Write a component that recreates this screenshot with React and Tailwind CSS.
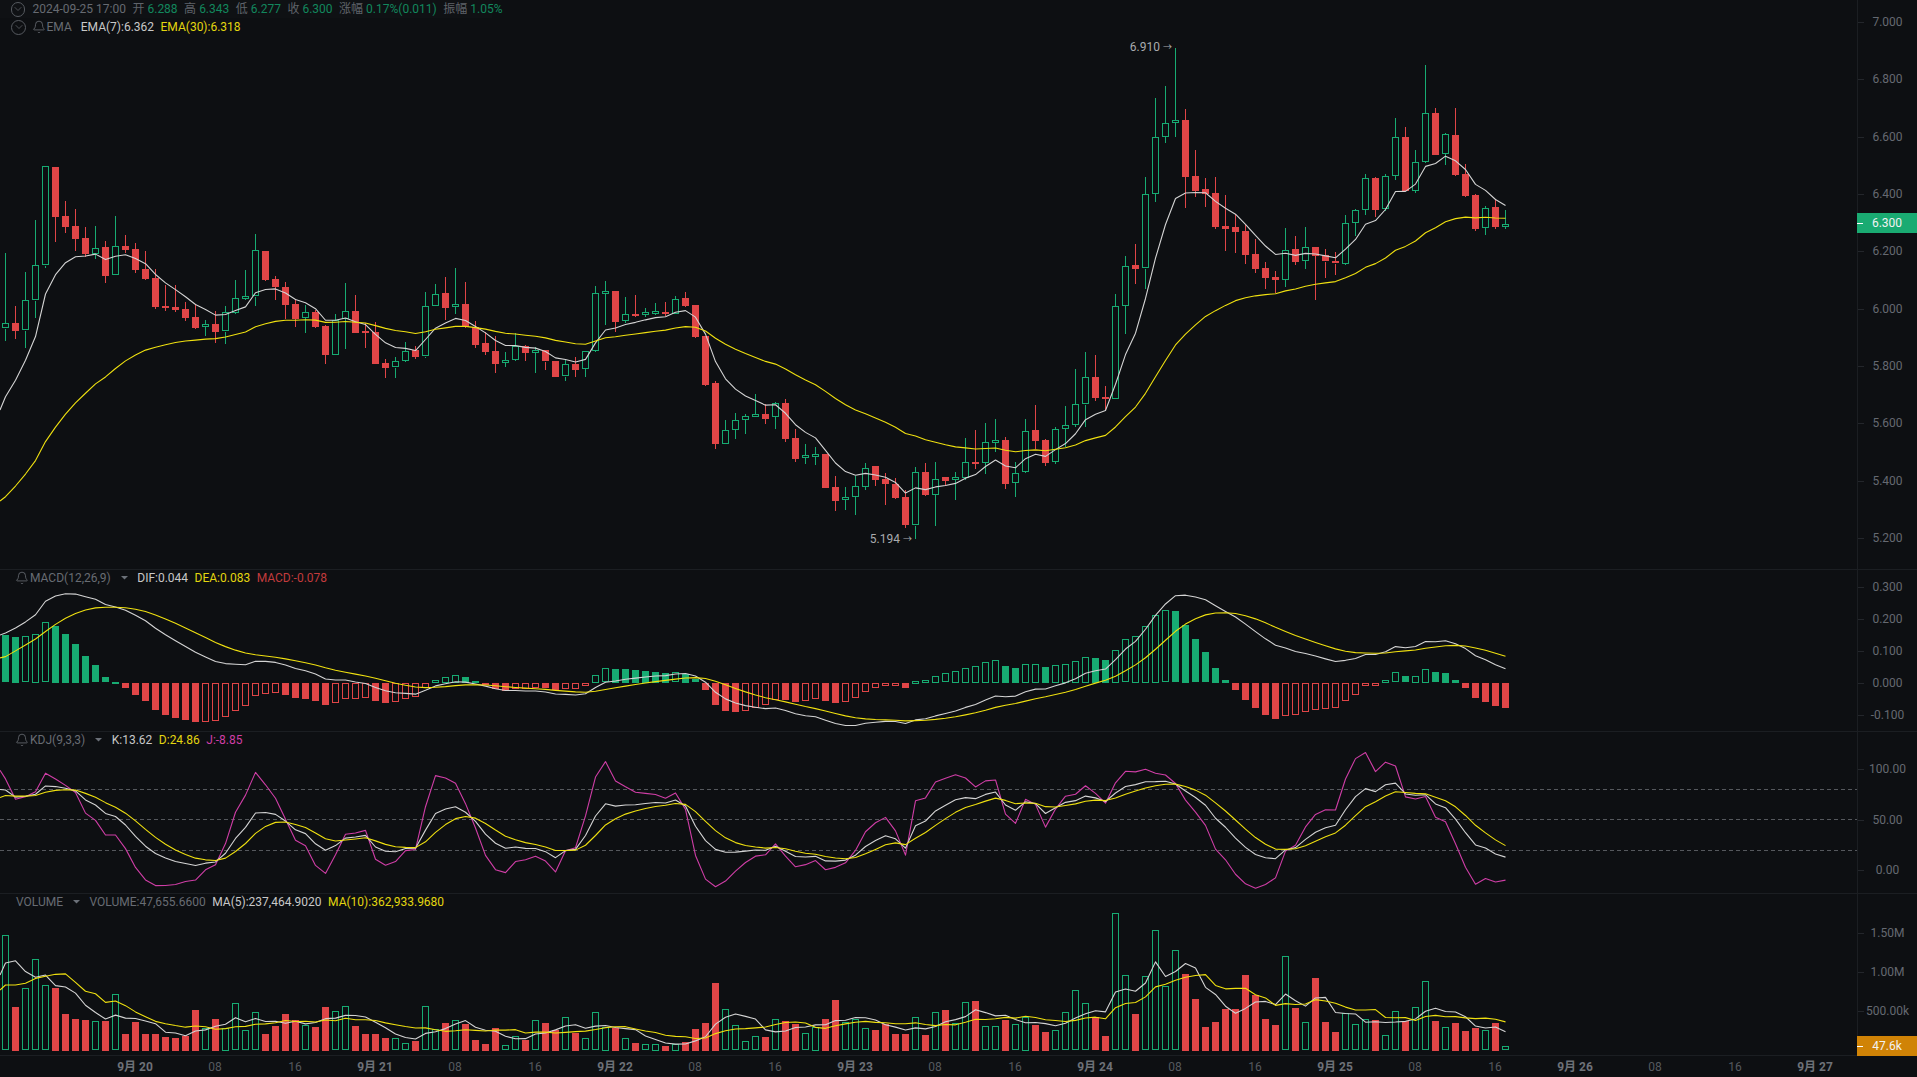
import React from "react";
import { Bell, ChevronDown } from "lucide-react";

const GREEN = "#17ab72";
const RED = "#e04547";
const YEL = "#efe010";
const WHT = "#d4d4d4";
const MAG = "#cf3ea6";

// [wickTop, bodyTop, bodyBottom, wickBottom, green]
const seg9 = [[280,490,506,543,1],[438,489,513,538,0],[335,421,512,563,1],[180,316,422,473,1],[19,19,317,325,1],[21,21,170,245,0],[122,168,200,220,0],[146,198,237,272,0],[202,234,282,290,0],[198,265,282,297,1],[244,261,348,368,0],[168,259,347,347,1],[226,258,270,280,0],[250,267,330,340,0],[273,327,357,360,0],[327,354,441,448,0],[376,438,444,453,0],[376,441,450,455,0],[427,447,474,483,0],[432,471,504,507,0],[480,493,502,528,1],[452,492,516,548,0],[438,457,515,552,1],[360,415,460,462,1],[330,409,416,420,1],[222,271,410,437,1],[273,273,360,363,0],[347,357,381,421,0],[367,381,435,477,0],[417,432,477,500,0],[435,457,475,518,1],[450,456,500,505,0],[495,498,585,612,0],[463,480,584,584,1],[370,454,478,567,1],[405,453,519,520,0],[490,513,519,563,0],[486,516,612,612,0],[597,609,624,653,0],[592,604,623,654,1],[545,574,604,605,1],[558,571,591,597,0],[396,439,590,593,1],[373,403,440,440,1],[350,399,443,480,0],[325,433,442,462,1],[366,432,500,505,0],[484,500,555,565,0],[516,549,575,586,0],[527,573,611,638,0],[575,601,605,620,1],[520,558,601,602,1],[555,558,578,602,0],[560,571,580,638,1],[570,571,605,630,0],[603,603,651,652,0],[600,613,650,662,1],[592,612,629,651,0],[574,574,628,650,1],[378,400,574,576,1],[364,394,400,495,1],[393,393,486,517,0],[412,463,484,488,1],[405,462,467,470,0]];
const seg7 = [[25,37,44,50,1],[8,33,38,45,1],[7,37,42,48,0],[-12,-4,40,42,1],[-25,-6,18,20,0],[15,15,110,115,0],[107,107,255,258,0],[243,249,432,448,0],[360,391,432,432,1],[340,361,391,416,1],[342,349,361,401,1],[283,343,350,352,1],[313,342,357,372,0],[307,310,352,388,1],[297,309,417,425,0],[388,414,477,485,0],[433,466,475,491,1],[440,463,467,495,1],[462,462,563,564,0],[527,561,603,633,0],[560,592,601,630,1],[527,559,592,645,1],[490,503,559,570,1],[498,498,539,558,0],[520,537,552,614,0],[535,552,594,598,0],[570,591,675,683,0],[502,517,677,718,1],[490,516,585,589,0],[487,536,583,678,1],[531,531,543,557,0],[517,532,541,600,1],[415,487,535,540,1],[390,486,492,508,0],[370,427,490,522,1],[356,421,428,456,1],[410,420,552,566,0],[487,520,550,590,1],[357,394,517,518,1],[315,390,422,448,0],[416,420,489,498,0],[380,388,486,492,1],[317,376,388,440,1],[207,313,376,382,1],[156,232,314,382,1],[166,232,294,302,0],[257,292,297,330,0]];
const seg8 = [[823,857,1136,1136,1],[709,737,857,942,1],[672,736,747,792,0],[471,523,746,806,1],[233,352,523,546,1],[198,310,352,368,1],[85,301,310,352,1],[268,300,470,564,0],[389,468,513,530,0],[475,507,521,560,0],[470,519,621,628,0],[525,618,627,692,0],[583,622,636,700,0],[615,633,704,732,0],[658,702,747,758,0],[727,744,773,806,0],[753,771,779,820,0],[625,689,778,802,1],[648,687,725,736,0],[620,682,724,746,1],[681,681,707,840,0],[688,706,725,773,0],[697,724,731,765,0],[586,610,733,736,1],[568,571,610,648,1],[463,475,570,584,1],[470,474,569,592,0],[463,469,569,572,1],[294,352,469,480,1],[321,351,513,514,0],[391,427,514,518,1],[135,280,427,428,1],[264,279,404,406,0],[340,343,403,435,1],[264,345,464,468,0],[432,462,527,530,0],[522,525,627,632,0],[559,565,625,645,1],[538,561,621,628,0],[571,611,619,627,1]];

const toReal = (arr, base) => arr.map((c) => ({ wt: base + c[0] / 3, bt: base + c[1] / 3, bb: base + c[2] / 3, wb: base + c[3] / 3, up: !!c[4] }));
const candles = [...toReal(seg9, 160), ...toReal(seg7, 300), ...toReal(seg8, 20)];
const cx = (i) => 5.5 + 10 * i;
const closeY = (c) => (c.up ? c.bt : c.bb);

// zoomed tops of the volume bars (base 900, one third px per unit)
const volTops = [106,321,265,178,256,264,342,357,360,364,363,283,402,366,402,402,411,414,408,330,385,357,383,310,391,337,402,378,342,360,376,381,321,334,319,378,402,402,414,415,430,423,319,388,369,361,372,420,432,384,436,409,419,361,369,390,352,398,415,337,380,383,415,429,433,431,438,431,426,387,369,249,328,376,424,409,411,358,363,372,400,380,357,300,367,358,385,390,372,402,402,352,405,337,330,370,307,303,379,379,360,373,350,375,396,391,337,271,310,352,408,40,226,342,229,91,259,151,222,297,381,366,327,327,225,285,357,375,169,324,367,234,366,396,340,373,358,360,406,334,362,322,244,363,382,369,393,384,391,369,439];
const V0 = 452;
const volH = volTops.map((t) => V0 - t);

function ema(k, seed) {
  const out = [seed];
  for (let i = 1; i < candles.length; i++) out.push(out[i - 1] + k * (closeY(candles[i]) - out[i - 1]));
  return out;
}
const ema7 = ema(0.25, 396.7);
const ema30 = ema(2 / 31, 496.7);
const e12 = ema(2 / 13, 429.9);
const e26 = ema(2 / 27, 474.8);
const dif = e12.map((v, i) => (e26[i] - v) / 287.3);
const dea = [0.082];
for (let i = 1; i < dif.length; i++) dea.push(dea[i - 1] + 0.2 * (dif[i] - dea[i - 1]));
const hist = dif.map((v, i) => 2 * (v - dea[i]));
const macdY = (v) => 682.7 - v * 318;

const K = [79.5];
const D = [74];
for (let i = 1; i < candles.length; i++) {
  const from = Math.max(0, i - 8);
  let lo = i < 8 ? 440 : -1e9;
  let hi = 1e9;
  for (let j = from; j <= i; j++) {
    lo = Math.max(lo, candles[j].wb);
    hi = Math.min(hi, candles[j].wt);
  }
  const rsv = ((lo - closeY(candles[i])) / (lo - hi)) * 100;
  K.push((2 / 3) * K[i - 1] + rsv / 3);
  D.push((2 / 3) * D[i - 1] + K[i] / 3);
}
const J = K.map((v, i) => 3 * v - 2 * D[i]);
const kdjY = (v) => 870.3 - 1.01 * v;

const prevVol = [131, 131, 131, 131, 131, 97, 348, 360, 163];
const allVol = [...prevVol, ...volH];
const ma = (n) => volH.map((_, i) => {
  const e = i + prevVol.length;
  let s = 0;
  for (let j = e - n + 1; j <= e; j++) s += allVol[j];
  return s / n;
});
const ma5 = ma(5);
const ma10 = ma(10);
const volY = (h) => 900 + (V0 - h) / 3;

const pts = (arr, fn = (v) => v, start) => {
  const p = arr.map((v, i) => `${cx(i)},${fn(v).toFixed(2)}`);
  if (start !== undefined) p.unshift(`0,${start}`);
  return p.join(" ");
};

function Line({ points, color, width = 1.1 }) {
  return <polyline points={points} fill="none" stroke={color} strokeWidth={width} strokeLinejoin="round" />;
}

function Bar({ i, y0, y1, up, solid }) {
  const top = Math.round(Math.min(y0, y1));
  const h = Math.max(1, Math.round(Math.abs(y1 - y0)));
  const color = up ? GREEN : RED;
  if (solid) return <rect x={cx(i) - 3.5} y={top} width={7} height={Math.max(h, 2)} fill={color} shapeRendering="crispEdges" />;
  return <rect x={cx(i) - 3} y={top + 0.5} width={6} height={Math.max(h - 1, 2)} fill="none" stroke={color} strokeWidth={1} shapeRendering="crispEdges" />;
}

function Candles() {
  return candles.map((c, i) => (
    <g key={i}>
      <rect x={cx(i) - 0.5} y={c.wt} width={1} height={Math.max(0, c.bt - c.wt)} fill={c.up ? GREEN : RED} shapeRendering="crispEdges" />
      <rect x={cx(i) - 0.5} y={c.bb} width={1} height={Math.max(0, c.wb - c.bb)} fill={c.up ? GREEN : RED} shapeRendering="crispEdges" />
      <Bar i={i} y0={c.bt} y1={c.bb} up={c.up} solid={!c.up} />
    </g>
  ));
}

function Macd() {
  return hist.map((v, i) => {
    const prev = i ? hist[i - 1] : v + 0.001;
    const up = v >= 0;
    const solid = v < prev;
    return <Bar key={i} i={i} y0={macdY(0)} y1={macdY(v)} up={up} solid={solid} />;
  });
}

function Volume() {
  return volH.map((h, i) => {
    const up = candles[i].up;
    return <Bar key={i} i={i} y0={V0 / 3 + 900} y1={volY(h)} up={up} solid={!up} />;
  });
}

function AxisLabels({ items, top }) {
  return items.map(([label, y]) => (
    <React.Fragment key={label}>
      <div className="absolute left-0 w-[6px] h-px bg-[#23262b]" style={{ top: y - top }} />
      <div className="absolute left-0 right-0 h-4 leading-4 text-center text-[12px] text-[#656971]" style={{ top: y - top - 8 }}>{label}</div>
    </React.Fragment>
  ));
}

function Tag({ label, y, top, bg }) {
  return (
    <div className={`absolute left-[-1px] right-0 h-[20px] flex items-center justify-center text-[12px] leading-none text-[#f2f2f2] ${bg}`} style={{ top: y - top }}>
      <div className="absolute left-0 top-[9.5px] w-[6px] h-px bg-white" />
      {label}
    </div>
  );
}

function Panel({ top, h, cls, svg, legend, axis, extra }) {
  return (
    <div className={`flex w-full border-b border-[#1b1e22] box-content ${cls}`}>
      <div className="relative w-[1857px] h-full">
        <svg className="block w-full h-full" viewBox={`0 ${top} 1857 ${h}`}>{svg}</svg>
        {legend}
        {extra}
      </div>
      <div className="relative w-[60px] h-full border-l border-[#1b1e22]">{axis}</div>
    </div>
  );
}

const Caret = () => (
  <svg width="7" height="4" viewBox="0 0 7 4" className="shrink-0"><path d="M0 0h7L3.5 3.5z" fill="#6b7078" /></svg>
);

const Bl = () => <Bell size={14} strokeWidth={1.2} className="shrink-0 text-[#777b82]" />;

const Circle = ({ className }) => (
  <div className={`w-[15px] h-[15px] rounded-full border border-[#565a60] flex items-center justify-center ${className}`}>
    <ChevronDown size={12} strokeWidth={1.2} className="text-[#777b82]" />
  </div>
);

function Pair({ l, v }) {
  return (
    <span className="flex items-center gap-[3px]">
      <span className="text-[#5f636a]">{l}</span>
      <span className="text-[#12875d]">{v}</span>
    </span>
  );
}

function SubLegend({ name, bell = true, children }) {
  return (
    <div className="absolute left-[15px] top-0 h-4 flex items-center text-[12px] leading-none whitespace-nowrap">
      {bell && <Bl />}
      <span className="ml-px text-[#686c73]">{name}</span>
      <span className="ml-[10px] mr-[9.5px]"><Caret /></span>
      <span className="flex items-center gap-[6.5px]">{children}</span>
    </div>
  );
}

const times = ["9月 20","08","16","9月 21","08","16","9月 22","08","16","9月 23","08","16","9月 24","08","16","9月 25","08","16","9月 26","08","16","9月 27"];

export default function App() {
  const mainItems = ["7.000","6.800","6.600","6.400","6.200","6.000","5.800","5.600","5.400","5.200"].map((s) => [s, 194 + (6.4 - parseFloat(s)) * 286.5]);
  return (
    <div className="w-[1917px] h-[1077px] overflow-hidden flex flex-col bg-[#0d0f12] font-[Roboto,'Noto_Sans_CJK_SC',sans-serif]">
      <Panel
        top={0}
        h={569}
        cls="h-[569px]"
        svg={
          <g>
            <Candles />
            <Line points={pts(ema7, undefined, 410)} color={WHT} />
            <Line points={pts(ema30, undefined, 501)} color={YEL} />
          </g>
        }
        legend={
          <div className="absolute left-[11px] top-0 flex flex-col text-[12px] leading-none whitespace-nowrap">
            <div className="h-[18px] w-[492px] -ml-[11px] pl-[11px] flex items-center gap-[6.5px] bg-[#0f1114]">
              <Circle className="mr-[1px]" />
              <span className="text-[#666a71]">2024-09-25 17:00</span>
              <Pair l="开" v="6.288" />
              <Pair l="高" v="6.343" />
              <Pair l="低" v="6.277" />
              <Pair l="收" v="6.300" />
              <Pair l="涨幅" v="0.17%(0.011)" />
              <Pair l="振幅" v="1.05%" />
            </div>
            <div className="h-[18px] flex items-center">
              <Circle className="mr-[5.5px]" />
              <Bl />
              <span className="ml-px text-[#686c73]">EMA</span>
              <span className="ml-[9px] text-[#c8c8c8]">EMA(7):6.362</span>
              <span className="ml-[6.5px] text-[#e3d60f]">EMA(30):6.318</span>
            </div>
          </div>
        }
        extra={
          <>
            <div className="absolute right-[685px] top-[39px] h-4 flex items-center gap-[3px] text-[12px] leading-none text-[#a9abae]">6.910 <span className="text-[9px]">→</span></div>
            <div className="absolute right-[945px] top-[531px] h-4 flex items-center gap-[3px] text-[12px] leading-none text-[#a9abae]">5.194 <span className="text-[9px]">→</span></div>
          </>
        }
        axis={
          <>
            <AxisLabels items={mainItems} top={0} />
            <Tag label="6.300" y={213} top={0} bg="bg-[#1aab72]" />
          </>
        }
      />
      <Panel
        top={570}
        h={161}
        cls="h-[161px]"
        svg={
          <g>
            <Macd />
            <Line points={pts(dif, macdY, macdY(0.15).toFixed(1))} color={WHT} />
            <Line points={pts(dea, macdY, macdY(0.078).toFixed(1))} color={YEL} />
          </g>
        }
        legend={
          <SubLegend name="MACD(12,26,9)">
            <span className="text-[#c8c8c8]">DIF:0.044</span>
            <span className="text-[#e3d60f]">DEA:0.083</span>
            <span className="text-[#c23b3d]">MACD:-0.078</span>
          </SubLegend>
        }
        axis={<AxisLabels top={570} items={[["0.300",587.3],["0.200",619],["0.100",650.9],["0.000",682.7],["-0.100",714.5]]} />}
      />
      <Panel
        top={732}
        h={161}
        cls="h-[161px]"
        svg={
          <g>
            {[789.5, 819.5, 850.5].map((y) => (
              <line key={y} x1="0" x2="1857" y1={y} y2={y} stroke="#55585d" strokeWidth="1" strokeDasharray="4 3" />
            ))}
            <Line points={pts(J, kdjY, kdjY(99).toFixed(1))} color={MAG} />
            <Line points={pts(K, kdjY, kdjY(80).toFixed(1))} color={WHT} />
            <Line points={pts(D, kdjY, kdjY(72).toFixed(1))} color={YEL} />
          </g>
        }
        legend={
          <SubLegend name="KDJ(9,3,3)">
            <span className="text-[#c8c8c8]">K:13.62</span>
            <span className="text-[#e3d60f]">D:24.86</span>
            <span className="text-[#cf3ea6]">J:-8.85</span>
          </SubLegend>
        }
        axis={<AxisLabels top={732} items={[["100.00",768.5],["50.00",819.5],["0.00",870]]} />}
      />
      <Panel
        top={894}
        h={161}
        cls="h-[161px]"
        svg={
          <g>
            <Volume />
            <Line points={pts(ma5, volY, 975)} color={WHT} />
            <Line points={pts(ma10, volY, 990)} color={YEL} />
          </g>
        }
        legend={
          <SubLegend name="VOLUME" bell={false}>
            <span className="text-[#686c73]">VOLUME:47,655.6600</span>
            <span className="text-[#c8c8c8]">MA(5):237,464.9020</span>
            <span className="text-[#e3d60f]">MA(10):362,933.9680</span>
          </SubLegend>
        }
        axis={
          <>
            <AxisLabels top={894} items={[["1.50M",932.7],["1.00M",971.7],["500.00k",1010.7]]} />
            <Tag label="47.6k" y={1036} top={894} bg="bg-[#d08306] w-[60px]" />
          </>
        }
      />
      <div className="flex h-[21px] pl-[95px] items-center text-[12px] leading-none">
        {times.map((t, i) => (
          <div key={i} className={`w-[80px] shrink-0 text-center ${t.includes("月") ? "font-bold text-[#6d7178]" : "text-[#55595f]"}`}>{t}</div>
        ))}
      </div>
    </div>
  );
}
